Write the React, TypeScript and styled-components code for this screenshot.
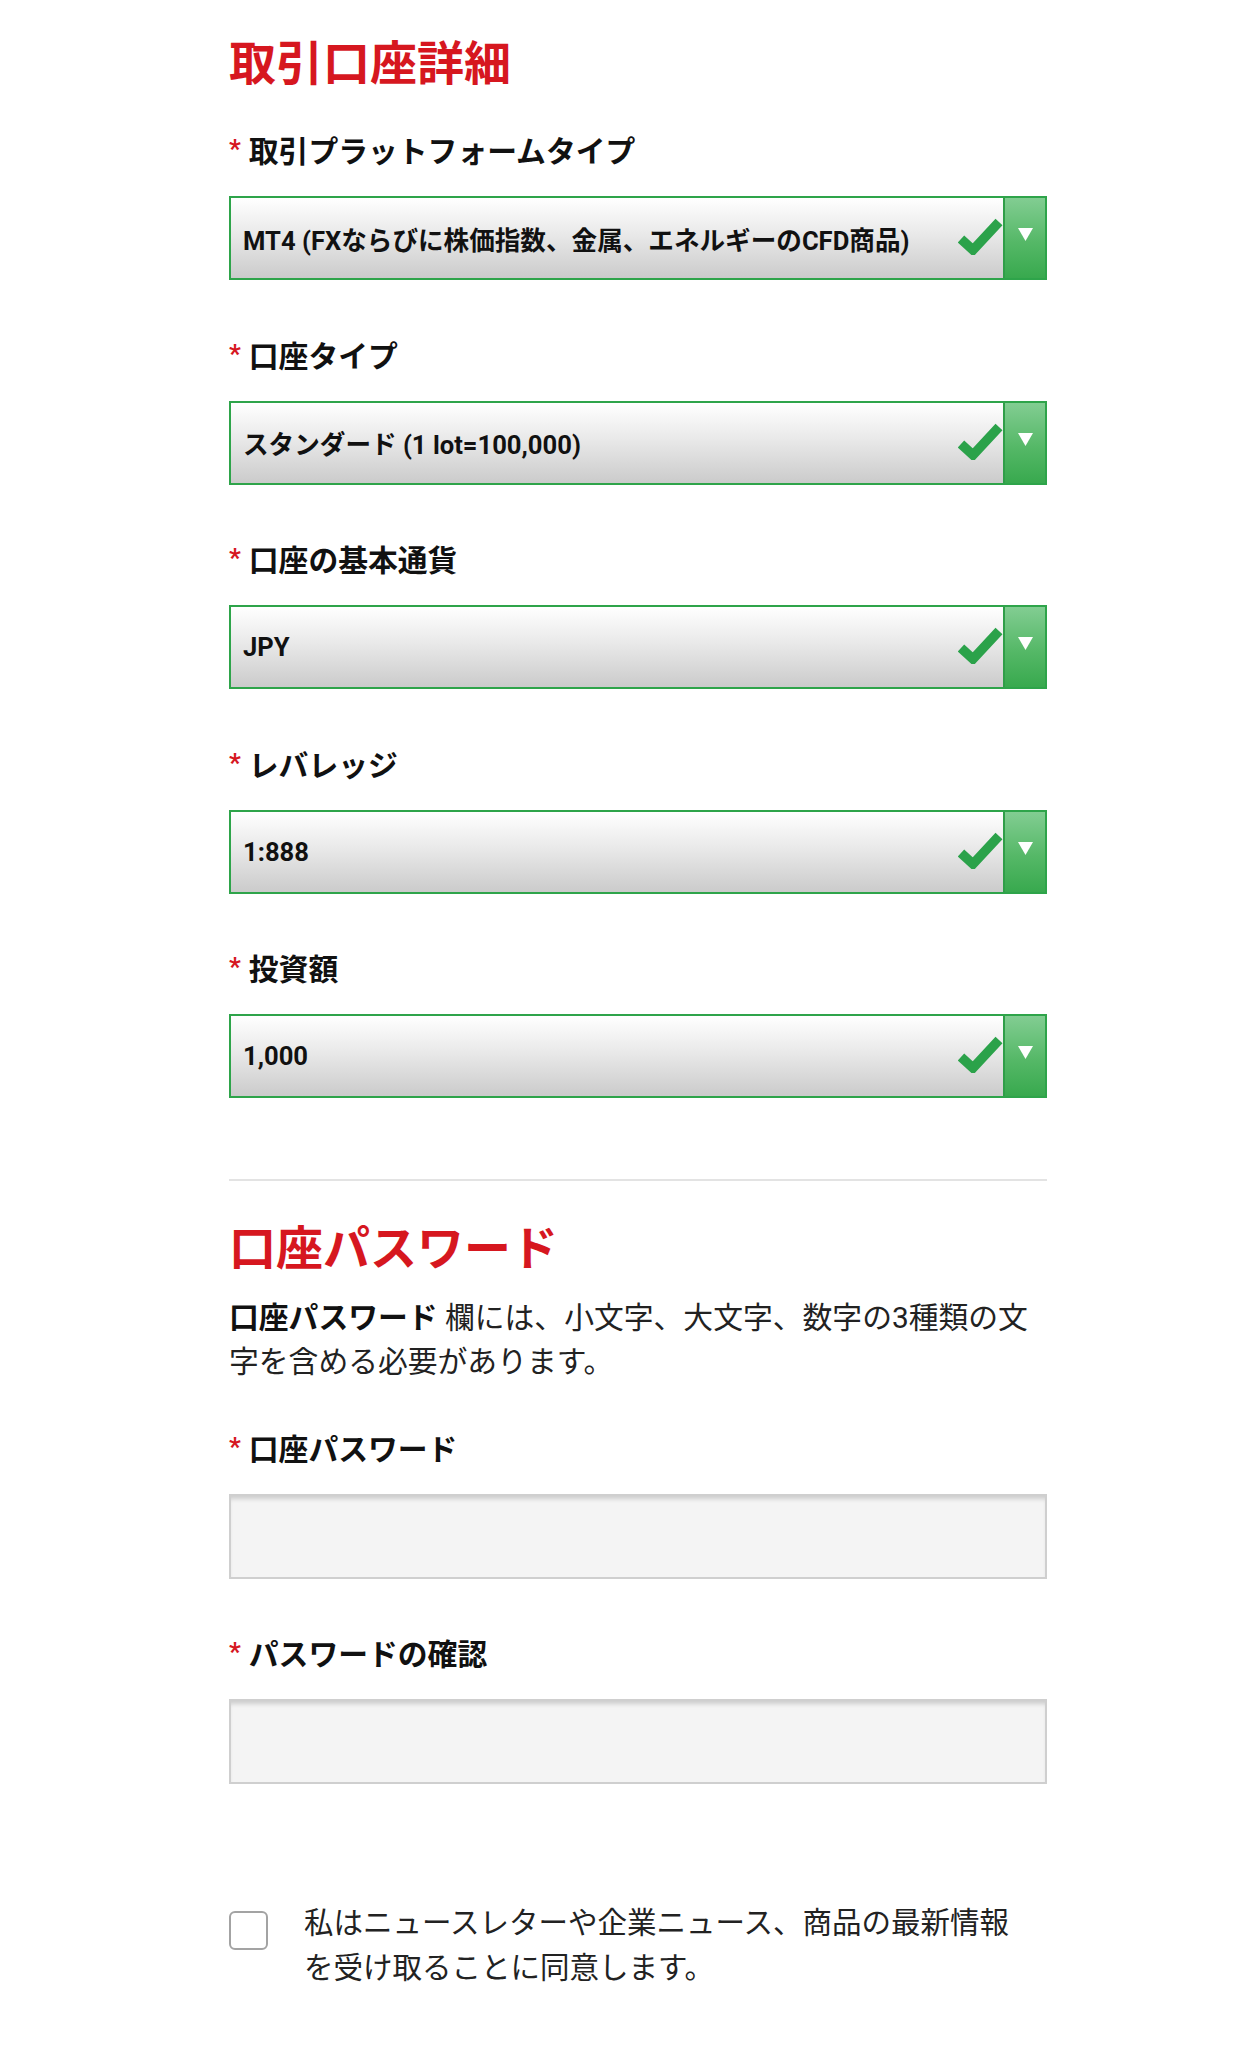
import styled, { createGlobalStyle } from "styled-components";

// GLOBAL
const GlobalStyle = createGlobalStyle`
  html, body {
    margin: 0;
    padding: 0;
    background: #ffffff;
  }
  body {
    font-family: Roboto, "Noto Sans CJK JP", "Noto Sans", sans-serif;
    color: #111111;
  }
`;

// STYLE
const Page = styled.main`
  width: 818px;
  margin-left: 229px;
  padding-top: 31px;
  padding-bottom: 80px;
`;

const SectionTitle = styled.h2`
  margin: 0;
  font-size: 47px;
  line-height: 66px;
  font-weight: 700;
  color: #d6171f;
`;

const Field = styled.div<{ $gap?: number }>`
  display: flex;
  flex-direction: column;
  margin-top: ${(p) => (p.$gap ?? 53.5)}px;
`;

const Label = styled.label`
  display: flex;
  align-items: center;
  height: 40px;
  font-size: 29.8px;
  font-weight: 700;
  color: #111111;
  margin-bottom: 27px;
`;

const Req = styled.span`
  color: #d6171f;
  font-size: 26px;
  margin-right: 8px;
  font-weight: 700;
`;

const SelectBox = styled.div`
  display: flex;
  align-items: stretch;
  height: 84px;
  box-sizing: border-box;
  border: 2px solid #2ea44a;
  background: linear-gradient(to bottom, #ffffff 0%, #e9e9e9 45%, #cbcbcb 100%);
`;

const SelectValue = styled.div`
  flex: 1;
  display: flex;
  align-items: center;
  padding-left: 12px;
  font-size: 25.6px;
  font-weight: 700;
  color: #111111;
  white-space: nowrap;
  overflow: hidden;
`;

const CheckWrap = styled.div`
  display: flex;
  align-items: center;
  padding-bottom: 4px;
`;

const ArrowButton = styled.div`
  width: 42px;
  display: flex;
  justify-content: center;
  align-items: flex-start;
  padding-top: 30px;
  box-sizing: border-box;
  border-left: 2px solid #2f9e48;
  background: linear-gradient(to bottom, #82cd92 0%, #55b867 55%, #38a94e 100%);
`;

const Divider = styled.hr`
  border: none;
  height: 2px;
  background: #e3e3e3;
  margin: 81px 0 35px;
`;

const Intro = styled.p`
  margin: 14px 0 0;
  font-size: 29.8px;
  line-height: 44px;
  color: #222222;
  font-weight: 400;

  b {
    font-weight: 700;
    color: #111111;
  }
`;

const TextInput = styled.input`
  height: 85px;
  box-sizing: border-box;
  border: 2px solid #cfcfcf;
  background: #f4f4f4;
  box-shadow: inset 0 5px 4px -2px rgba(0, 0, 0, 0.16);
  outline: none;
  font-size: 26px;
  padding: 0 12px;
`;

const ConsentRow = styled.label`
  display: flex;
  align-items: flex-start;
  gap: 36px;
  margin-top: 117px;
`;

const CheckBox = styled.span`
  flex: none;
  width: 39px;
  height: 39px;
  margin-top: 10px;
  box-sizing: border-box;
  border: 2px solid #a3a3a3;
  border-radius: 6px;
  background: #ffffff;
`;

const ConsentText = styled.span`
  max-width: 720px;
  font-size: 29.5px;
  line-height: 45px;
  color: #222222;
`;

// DATA
const selects = [
  { label: "取引プラットフォームタイプ", value: "MT4 (FXならびに株価指数、金属、エネルギーのCFD商品)" },
  { label: "口座タイプ", value: "スタンダード (1 lot=100,000)" },
  { label: "口座の基本通貨", value: "JPY" },
  { label: "レバレッジ", value: "1:888" },
  { label: "投資額", value: "1,000" },
];

const CheckIcon = () => (
  <svg width="45" height="38" viewBox="0 0 45 38">
    <polyline
      points="3,22 15,33 41,5"
      fill="none"
      stroke="#2ba24a"
      strokeWidth="9.5"
      strokeLinejoin="miter"
    />
  </svg>
);

const ArrowIcon = () => (
  <svg width="15" height="13" viewBox="0 0 15 13">
    <polygon points="0,0 15,0 7.5,13" fill="#ffffff" />
  </svg>
);

const SelectField = ({ label, value, first }: { label: string; value: string; first?: boolean }) => (
  <Field $gap={first ? 32 : 53.5}>
    <Label>
      <Req>*</Req>
      {label}
    </Label>
    <SelectBox>
      <SelectValue>{value}</SelectValue>
      <CheckWrap>
        <CheckIcon />
      </CheckWrap>
      <ArrowButton>
        <ArrowIcon />
      </ArrowButton>
    </SelectBox>
  </Field>
);

const PasswordField = ({ label, first }: { label: string; first?: boolean }) => (
  <Field $gap={first ? 43 : 53}>
    <Label>
      <Req>*</Req>
      {label}
    </Label>
    <TextInput type="password" />
  </Field>
);

// COMP
const App = () => {
  return (
    <>
      <GlobalStyle />
      <Page>
        <SectionTitle>取引口座詳細</SectionTitle>
        {selects.map((s, i) => (
          <SelectField key={s.label} label={s.label} value={s.value} first={i === 0} />
        ))}

        <Divider />

        <SectionTitle>口座パスワード</SectionTitle>
        <Intro>
          <b>口座パスワード </b>欄には、小文字、大文字、数字の3種類の文字を含める必要があります。
        </Intro>

        <PasswordField label="口座パスワード" first />
        <PasswordField label="パスワードの確認" />

        <ConsentRow>
          <CheckBox />
          <ConsentText>私はニュースレターや企業ニュース、商品の最新情報を受け取ることに同意します。</ConsentText>
        </ConsentRow>
      </Page>
    </>
  );
};

export default App;
